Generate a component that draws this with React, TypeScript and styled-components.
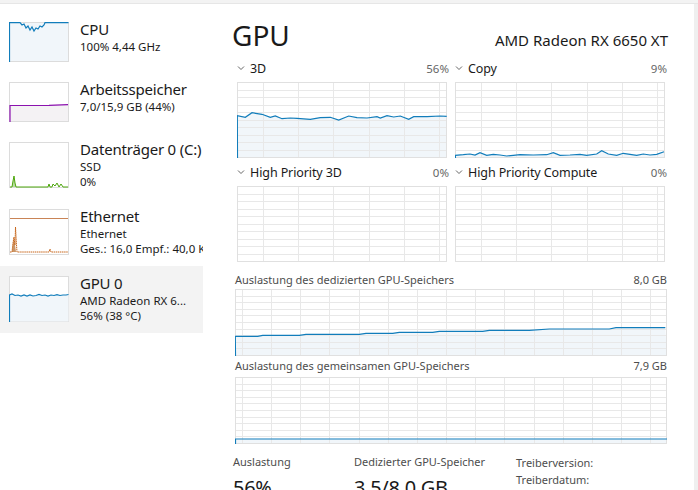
import styled, { createGlobalStyle } from "styled-components";

const GlobalStyle = createGlobalStyle`
  html, body {
    margin: 0;
    padding: 0;
    background: #ffffff;
  }
  body {
    font-family: "Noto Sans", "Segoe UI", sans-serif;
    color: #1a1a1a;
    overflow: hidden;
  }
`;

const BLUE = "#117dbb";
const BLUE_FILL = "#f1f6fa";
const GRID = "#e8e8e8";

// layout -----
const Window = styled.div`
  width: 698px;
  height: 490px;
  display: flex;
  flex-direction: column;
  overflow: hidden;
`;

const TopStrip = styled.div`
  height: 3px;
  background: #f3f3f3;
  border-bottom: 1px solid #e6e6e6;
`;

const Body = styled.div`
  flex: 1;
  display: flex;
  min-height: 0;
`;

const Sidebar = styled.nav`
  width: 203px;
  flex-shrink: 0;
  padding-top: 8px;
  overflow: hidden;
`;

const Item = styled.div<{ $active?: boolean }>`
  display: flex;
  align-items: flex-start;
  gap: 11px;
  padding: 10px 0 10px 9px;
  background: ${(p) => (p.$active ? "#f3f3f3" : "transparent")};
`;

const Thumb = styled.svg`
  display: block;
  flex-shrink: 0;
`;

const ItemText = styled.div`
  margin-top: -3px;
  white-space: nowrap;
  min-width: 0;
`;

const ItemTitle = styled.div`
  font-size: 15px;
  line-height: 20px;
  letter-spacing: -0.2px;
`;

const ItemSub = styled.div`
  font-size: 11.5px;
  line-height: 15px;
`;

const Main = styled.main`
  flex: 1;
  min-width: 0;
  padding: 13px 27px 0 32px;
`;

const Scrollbar = styled.div`
  width: 4px;
  flex-shrink: 0;
  background: #efefef;
`;

const Header = styled.div`
  display: flex;
  justify-content: space-between;
  align-items: baseline;
`;

const Heading = styled.h1`
  margin: 0 0 0 -3px;
  font-size: 28px;
  line-height: 36px;
  font-weight: 400;
`;

const DeviceName = styled.div`
  font-size: 15px;
  margin-right: -1px;
`;

const EngineGrid = styled.div`
  display: grid;
  grid-template-columns: 210px 210px;
  column-gap: 8px;
  row-gap: 5px;
  margin: 6px 0 0 2px;
`;

const EngineCell = styled.div`
  display: flex;
  flex-direction: column;
  gap: 5px;
`;

const EngineHead = styled.div`
  display: flex;
  align-items: center;
  height: 18px;
`;

const EngineName = styled.span`
  font-size: 12.5px;
  letter-spacing: -0.1px;
  margin-left: 5px;
  flex: 1;
`;

const Percent = styled.span`
  font-size: 11.5px;
  color: #666;
  margin-right: -2px;
`;

const MemSection = styled.div<{ $top: number; $gap: number }>`
  margin-top: ${(p) => p.$top}px;
  display: flex;
  flex-direction: column;
  gap: ${(p) => p.$gap}px;
`;

const MemHead = styled.div`
  display: flex;
  justify-content: space-between;
  font-size: 11px;
  line-height: 16px;
  color: #4d4d4d;
`;

const Stats = styled.div`
  display: grid;
  grid-template-columns: 121px 162px auto;
  margin: 10px 0 0 -2px;
`;

const StatLabel = styled.div`
  font-size: 11px;
  line-height: 16px;
  color: #4d4d4d;
`;

const StatValue = styled.div`
  font-size: 20px;
  line-height: 28px;
  letter-spacing: -0.3px;
  margin-top: 4px;
`;

const DriverLine = styled.div`
  font-size: 11px;
  line-height: 17px;
  color: #4d4d4d;
`;

// charts -----
type Pt = [number, number];

function Chart({
  w,
  h,
  colStep,
  colOffset,
  rows,
  points,
}: {
  w: number;
  h: number;
  colStep: number;
  colOffset: number;
  rows: number;
  points: Pt[];
}) {
  const cols: number[] = [];
  for (let x = colOffset; x < w - 1; x += colStep) cols.push(Math.round(x) + 0.5);
  const rowLines: number[] = [];
  for (let i = 1; i < rows; i++) rowLines.push(Math.round((i * (h - 1)) / rows) + 0.5);
  const line = points.map(([x, y]) => `${x},${y}`).join(" ");
  const area = `0,${h} ${line} ${w},${h}`;
  return (
    <svg width={w} height={h} style={{ display: "block" }}>
      {points.length > 0 && <polygon points={area} fill={BLUE_FILL} />}
      {cols.map((x) => (
        <line key={"c" + x} x1={x} x2={x} y1={0} y2={h} stroke={GRID} />
      ))}
      {rowLines.map((y) => (
        <line key={"r" + y} x1={0} x2={w} y1={y} y2={y} stroke={GRID} />
      ))}
      <rect x={0.5} y={0.5} width={w - 1} height={h - 1} fill="none" stroke="#e0e0e0" />
      {points.length > 0 && (
        <polyline
          points={`0.5,${h} ${line}`}
          fill="none"
          stroke={BLUE}
          strokeWidth={1.2}
        />
      )}
    </svg>
  );
}

const Chevron = () => (
  <svg width="8" height="8" viewBox="0 0 8 8" style={{ display: "block" }}>
    <polyline points="1,2.5 4,5.5 7,2.5" fill="none" stroke="#555" strokeWidth="0.9" />
  </svg>
);

// zoomed coords -> px
const zp = (arr: number[][], x0: number, y0: number): Pt[] =>
  arr.map(([x, y]) => [+((x - x0) / 3).toFixed(1), +((y - y0) / 3).toFixed(1)]);

const d3: Pt[] = zp(
  [
    [51, 347], [75, 352], [95, 338], [125, 343], [150, 352], [165, 348], [185, 356],
    [210, 354], [230, 355], [270, 358], [300, 353], [330, 352], [355, 360], [385, 348],
    [410, 353], [440, 354], [470, 350], [480, 354], [500, 347], [520, 351], [540, 348],
    [565, 358], [580, 350], [620, 350], [660, 348], [679, 349],
  ],
  50,
  246
);

const copyPts: Pt[] = zp(
  [
    [16, 466], [40, 464], [60, 462], [75, 465], [90, 458], [110, 466], [130, 463],
    [150, 465], [170, 468], [190, 466], [210, 464], [250, 465], [290, 464], [310, 458],
    [330, 466], [360, 465], [390, 463], [410, 466], [440, 462], [455, 452], [475, 462],
    [500, 466], [520, 460], [540, 463], [560, 466], [580, 462], [600, 465], [620, 463],
    [642, 455],
  ],
  15,
  246
);

const dedicatedPts: Pt[] = zp(
  [
    [48, 199], [115, 199], [130, 196], [240, 196], [260, 193], [420, 193], [440, 190],
    [520, 190], [540, 187], [640, 187], [660, 184], [790, 184], [810, 181], [930, 181],
    [990, 177], [1170, 177], [1190, 173], [1338, 173],
  ],
  47,
  57
);

const sharedPts: Pt[] = [
  [0.5, 62],
  [432, 62],
];

// sidebar thumbnails -----
function CpuThumb() {
  const pts = "0.5,40 0.5,0.7 11,0.7 13,3 15,2 17,6 19,4 21,8 23,5 25,9 27,6 29,7 31,4 33,5 35,3 36,0.7 59.5,0.7";
  return (
    <Thumb width={60} height={40}>
      <rect x={0.5} y={0.5} width={59} height={39} fill={BLUE_FILL} stroke="#dcdcdc" />
      <polyline points={pts} fill="none" stroke={BLUE} strokeWidth={1.2} />
    </Thumb>
  );
}

function MemThumb() {
  return (
    <Thumb width={60} height={40}>
      <rect x={0.5} y={0.5} width={59} height={39} fill="#fff" stroke="#dcdcdc" />
      <polygon points="1,23.5 58,23 59,22.5 59,39 1,39" fill="#f4f2f4" />
      <polyline points="1,40 1,23.5 40,23.3 59,22.7" fill="none" stroke="#8b12ae" strokeWidth={1.2} />
    </Thumb>
  );
}

function DiskThumb() {
  return (
    <Thumb width={60} height={46}>
      <rect x={0.5} y={0.5} width={59} height={45} fill="#fff" stroke="#dcdcdc" />
      <polygon points="3,45 4,39 5,34 6,41 7,45" fill="#b8dca0" />
      <polyline points="1,45 3,45 4,39 5,34 6,41 7,45 39,45 40,42 41,45 43,45 44,42 46,44 48,41 50,45 52,42 54,45 59,45" fill="none" stroke="#4da60c" strokeWidth={1} />
    </Thumb>
  );
}

function NetThumb() {
  return (
    <Thumb width={60} height={46}>
      <rect x={0.5} y={0.5} width={59} height={45} fill="#fff" stroke="#dcdcdc" />
      <line x1={1} x2={59} y1={9.5} y2={9.5} stroke="#c98456" strokeWidth={1} />
      <polygon points="3,43 4,34 5,28 6,36 7,43" fill="#a74f01" opacity={0.6} />
      <polyline points="1,43 3,43 4,34 5,28 6,36 6.5,18 7.5,36 8,43 40,43 41,40 42,43 59,43" fill="none" stroke="#c8671c" strokeWidth={1} strokeDasharray="1.5 0.6" />
    </Thumb>
  );
}

function GpuThumb() {
  const pts = "0.5,46 0.5,19 3,18 6,19.5 9,19 12,20 15,19 18,20 21,19 24,20 27,19.5 30,18.5 33,19.5 36,19 39,20 42,19 45,19.5 48,18.7 51,19.5 54,19 57,19 59.5,18.5";
  return (
    <Thumb width={60} height={46}>
      <rect x={0.5} y={0.5} width={59} height={45} fill="#fff" stroke="#dcdcdc" />
      <polygon points={`${pts} 59.5,45.5 0.5,45.5`} fill={BLUE_FILL} />
      <polyline points={pts} fill="none" stroke={BLUE} strokeWidth={1.2} />
    </Thumb>
  );
}

const engines = [
  { name: "3D", pct: "56%", pts: d3 },
  { name: "Copy", pct: "9%", pts: copyPts },
  { name: "High Priority 3D", pct: "0%", pts: [] as Pt[] },
  { name: "High Priority Compute", pct: "0%", pts: [] as Pt[] },
];

// main
function App() {
  return (
    <>
      <GlobalStyle />
      <Window>
        <TopStrip />
        <Body>
          <Sidebar>
            <Item>
              <CpuThumb />
              <ItemText>
                <ItemTitle>CPU</ItemTitle>
                <ItemSub>100% 4,44 GHz</ItemSub>
              </ItemText>
            </Item>
            <Item>
              <MemThumb />
              <ItemText>
                <ItemTitle>Arbeitsspeicher</ItemTitle>
                <ItemSub>7,0/15,9 GB (44%)</ItemSub>
              </ItemText>
            </Item>
            <Item>
              <DiskThumb />
              <ItemText>
                <ItemTitle>Datenträger 0 (C:)</ItemTitle>
                <ItemSub>SSD</ItemSub>
                <ItemSub>0%</ItemSub>
              </ItemText>
            </Item>
            <Item>
              <NetThumb />
              <ItemText>
                <ItemTitle>Ethernet</ItemTitle>
                <ItemSub>Ethernet</ItemSub>
                <ItemSub>Ges.: 16,0 Empf.: 40,0 KBit/s</ItemSub>
              </ItemText>
            </Item>
            <Item $active>
              <GpuThumb />
              <ItemText>
                <ItemTitle>GPU 0</ItemTitle>
                <ItemSub>AMD Radeon RX 6...</ItemSub>
                <ItemSub>56% (38 °C)</ItemSub>
              </ItemText>
            </Item>
          </Sidebar>

          <Main>
            <Header>
              <Heading>GPU</Heading>
              <DeviceName>AMD Radeon RX 6650 XT</DeviceName>
            </Header>

            <EngineGrid>
              {engines.map((e) => (
                <EngineCell key={e.name}>
                  <EngineHead>
                    <Chevron />
                    <EngineName>{e.name}</EngineName>
                    <Percent>{e.pct}</Percent>
                  </EngineHead>
                  <Chart w={210} h={76} colStep={35.3} colOffset={25.7} rows={10} points={e.pts} />
                </EngineCell>
              ))}
            </EngineGrid>

            <MemSection $top={10} $gap={1}>
              <MemHead>
                <span>Auslastung des dedizierten GPU-Speichers</span>
                <span>8,0 GB</span>
              </MemHead>
              <Chart w={432} h={67} colStep={29.2} colOffset={6.7} rows={10} points={dedicatedPts} />
            </MemSection>

            <MemSection $top={2} $gap={3}>
              <MemHead>
                <span>Auslastung des gemeinsamen GPU-Speichers</span>
                <span>7,9 GB</span>
              </MemHead>
              <Chart w={432} h={67} colStep={29.2} colOffset={6.7} rows={10} points={sharedPts} />
            </MemSection>

            <Stats>
              <div>
                <StatLabel>Auslastung</StatLabel>
                <StatValue>56%</StatValue>
              </div>
              <div>
                <StatLabel>Dedizierter GPU-Speicher</StatLabel>
                <StatValue>3,5/8,0 GB</StatValue>
              </div>
              <div>
                <DriverLine>Treiberversion:</DriverLine>
                <DriverLine>Treiberdatum:</DriverLine>
              </div>
            </Stats>
          </Main>
          <Scrollbar />
        </Body>
      </Window>
    </>
  );
}

export default App;
